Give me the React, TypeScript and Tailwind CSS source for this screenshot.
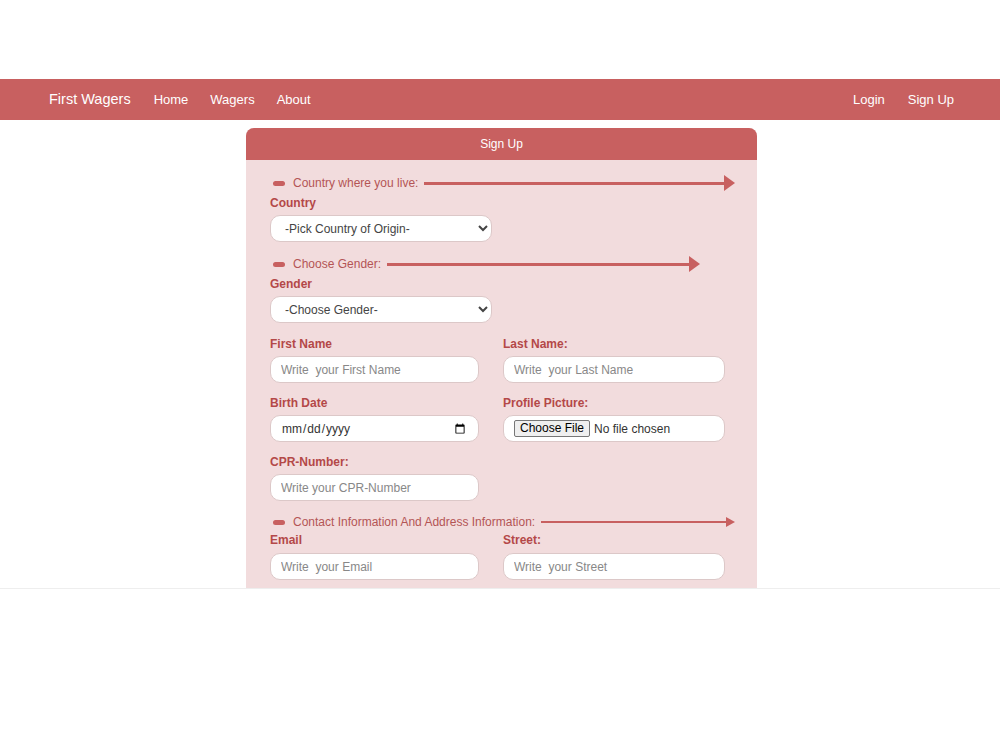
import React from "react";

const red = "#c86060";
const lab = "text-[12px] font-bold text-[#b44848] leading-[14px]";
const inp = "block h-[27px] rounded-[10px] border border-[#dcc8c8] bg-white px-[10px] text-[12px] text-[#333] placeholder:text-[#888] outline-none";

function Section({ text, mr, thin }: { text: string; mr: string; thin?: boolean }) {
  return (
    <div className={"flex items-center h-[14px] " + mr}>
      <div className="w-[12px] h-[5px] rounded-full bg-[#c86060] ml-[3px] shrink-0" />
      <span className="ml-[8px] text-[12px] text-[#b45555] whitespace-nowrap">{text}</span>
      <div className={"flex-1 ml-[6px] bg-[#c86060] " + (thin ? "h-[2px]" : "h-[3px]")} />
      <svg width={thin ? 9 : 11} height="18" viewBox={thin ? "0 0 9 18" : "0 0 11 18"} className="shrink-0">
        <polygon points={thin ? "0,4 9,9 0,14" : "0,1 11,9 0,17"} fill={red} />
      </svg>
    </div>
  );
}

export default function App() {
  return (
    <div className="w-[1000px] h-[750px] bg-white" style={{ fontFamily: "Arial, 'Liberation Sans', sans-serif" }}>
      <div className="h-[589px] border-b border-[#eee] overflow-hidden">
        <div className="h-[79px]" />
        <nav className="h-[41px] bg-[#c86060] flex items-center px-[46px] text-white text-[13px] pt-[1px]">
          <span className="text-[14.5px] ml-[3px] mr-[23px]">First Wagers</span>
          <span className="mr-[22px]">Home</span>
          <span className="mr-[22px]">Wagers</span>
          <span>About</span>
          <span className="ml-auto mr-[23px]">Login</span>
          <span>Sign Up</span>
        </nav>
        <div className="mt-[8px] ml-[246px] w-[511px] rounded-t-[8px] overflow-hidden bg-[#f2dcdd] h-[470px]">
          <div className="h-[32px] bg-[#c86060] text-white text-[12px] flex items-center justify-center">Sign Up</div>
          <div className="pl-[24px] pr-[22px] pt-[16px]">
            <Section text="Country where you live:" mr="mr-0" />
            <div className={lab + " mt-[6px]"}>Country</div>
            <select className={inp + " mt-[5px] w-[222px] text-[#444]"}><option>-Pick Country of Origin-</option></select>
            <div className="mt-[15px]"><Section text="Choose Gender:" mr="mr-[35px]" /></div>
            <div className={lab + " mt-[6px]"}>Gender</div>
            <select className={inp + " mt-[5px] w-[222px] text-[#444]"}><option>-Choose Gender-</option></select>
            <div className="grid grid-cols-[209px_222px] gap-x-[24px] mt-[14px]">
              <div>
                <div className={lab}>First Name</div>
                <input className={inp + " mt-[5px] w-full"} placeholder="Write  your First Name" />
              </div>
              <div>
                <div className={lab}>Last Name:</div>
                <input className={inp + " mt-[5px] w-full"} placeholder="Write  your Last Name" />
              </div>
              <div className="mt-[13px]">
                <div className={lab}>Birth Date</div>
                <input type="date" className={inp + " mt-[5px] w-full"} />
              </div>
              <div className="mt-[13px]">
                <div className={lab}>Profile Picture:</div>
                <div className={inp + " mt-[5px] w-full flex items-center"}>
                  <span className="border border-[#777] bg-[#efefef] rounded-[2px] px-[5px] text-[12px] text-black leading-[15px] whitespace-nowrap">Choose File</span>
                  <span className="ml-[4px] text-[12px] text-[#333] whitespace-nowrap">No file chosen</span>
                </div>
              </div>
              <div className="mt-[13px]">
                <div className={lab}>CPR-Number:</div>
                <input className={inp + " mt-[5px] w-full"} placeholder="Write your CPR-Number" />
              </div>
              <div />
            </div>
            <div className="mt-[14px]"><Section text="Contact Information And Address Information:" mr="mr-0" thin /></div>
            <div className="grid grid-cols-[209px_222px] gap-x-[24px] mt-[4px]">
              <div>
                <div className={lab}>Email</div>
                <input className={inp + " mt-[6px] w-full"} placeholder="Write  your Email" />
              </div>
              <div>
                <div className={lab}>Street:</div>
                <input className={inp + " mt-[6px] w-full"} placeholder="Write  your Street" />
              </div>
            </div>
          </div>
        </div>
      </div>
    </div>
  );
}
